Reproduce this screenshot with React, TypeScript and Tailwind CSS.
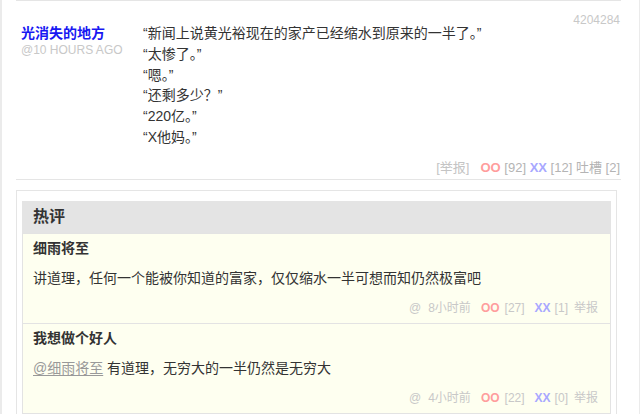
type HotComment = {
  name: string;
  reply?: string;
  text: string;
  time: string;
  oo: number;
  xx: number;
};

const lines = [
  '“新闻上说黄光裕现在的家产已经缩水到原来的一半了。”',
  '“太惨了。”',
  '“嗯。”',
  '“还剩多少？”',
  '“220亿。”',
  '“X他妈。”',
];

const hot: HotComment[] = [
  {
    name: '细雨将至',
    text: '讲道理，任何一个能被你知道的富家，仅仅缩水一半可想而知仍然极富吧',
    time: '8小时前',
    oo: 27,
    xx: 1,
  },
  {
    name: '我想做个好人',
    reply: '@细雨将至',
    text: '有道理，无穷大的一半仍然是无穷大',
    time: '4小时前',
    oo: 22,
    xx: 0,
  },
];

function HotRow({ c, last }: { c: HotComment; last: boolean }) {
  return (
    <div
      className={`border-x border-t border-[#e3e3e3] bg-[#fefff0] px-[10px] pt-[4px] pb-[5px] ${last ? 'border-b' : ''}`}
    >
      <div className="text-[14px] leading-[20px] font-bold text-[#333]">{c.name}</div>
      <div className="mt-[10px] text-[14px] leading-[20px] text-[#333]">
        {c.reply && (
          <>
            <span className="text-[#999] underline underline-offset-2">{c.reply}</span>{' '}
          </>
        )}
        {c.text}
      </div>
      <div className="mt-[10px] pr-[2px] text-right text-[12px] leading-[20px] text-[#c8c8c8]">
        <span>@</span>
        <span className="ml-[7px]">{c.time}</span>
        <span className="ml-[10px] font-bold text-[#ff9d9d]">OO</span>
        <span className="ml-[5px]">[{c.oo}]</span>
        <span className="ml-[10px] font-bold text-[#a8a8ff]">XX</span>
        <span className="ml-[4px]">[{c.xx}]</span>
        <span className="ml-[6px]">举报</span>
      </div>
    </div>
  );
}

export default function App() {
  return (
    <div className="min-h-screen bg-white font-['Liberation_Sans','Noto_Sans_CJK_SC',sans-serif] text-[#333]">
      <div className="min-h-[414px] w-[640px] border-r border-l-2 border-[#ebebeb] pr-[18px] pl-[14px]">
        {/* main comment */}
        <div className="border-y border-[#e5e5e5] pr-px">
          <div className="flex items-start pt-[11px]">
            <div className="w-[127px] shrink-0 pt-[11px] pl-[5px]">
              <div className="text-[14px] leading-[20px] font-bold text-[#1818f2]">光消失的地方</div>
              <div className="text-[12px] leading-[14px] text-[#c8c8c8]">@10 HOURS AGO</div>
            </div>
            <div className="flex-1 pt-[11px] text-[14px] leading-[20.8px] text-[#333]">
              {lines.map((l) => (
                <div key={l}>{l}</div>
              ))}
            </div>
            <div className="pt-px text-[12px] leading-[14px] text-[#c8c8c8]">4204284</div>
          </div>
          <div className="mt-[11px] mb-[2px] text-right text-[13px] leading-[18px] text-[#b4b4b4]">
            <span className="text-[#c4c4c4]">[举报]</span>
            <span className="ml-[11px] font-bold text-[#ff9d9d]">OO</span> <span>[92]</span>{' '}
            <span className="font-bold text-[#a8a8ff]">XX</span> <span>[12]</span>{' '}
            <span>吐槽 [2]</span>
          </div>
        </div>

        {/* hot comments */}
        <div className="mt-[10px] w-[601px] border border-[#e5e5e5] px-[5px] pt-[10px] pb-[5px]">
          <div className="h-[32px] bg-[#e4e4e4] pl-[11px] text-[16px] leading-[32px] font-bold text-[#333]">热评</div>
          {hot.map((c, i) => (
            <HotRow key={c.name} c={c} last={i === hot.length - 1} />
          ))}
        </div>
      </div>
    </div>
  );
}
